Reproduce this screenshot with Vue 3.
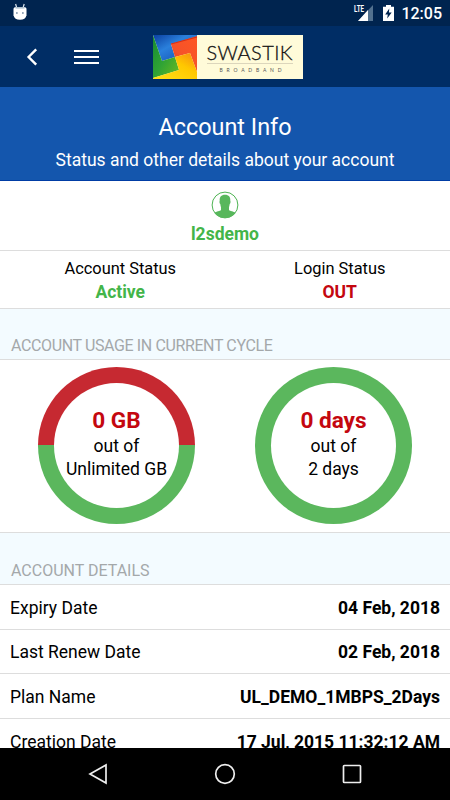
<template>
  <div class="phone">
    <div class="status-bar">
      <svg class="droid" width="14" height="18" viewBox="0 0 14 18">
        <path d="M2.600 1l1.200 4M11.200 1L10 5" stroke="#dce7f0" stroke-width="1.200" />
        <path d="M.5 6Q.5 4 3.500 4h7Q13.500 4 13.500 6v6.300Q12.500 16.800 7 16.800T.5 12.300z" fill="#fff" />
        <path d="M2.500 4.800h9" stroke="#a9bccb" stroke-width="1.500" />
        <circle cx="3.900" cy="10" r=".8" fill="#315176" />
        <circle cx="9.900" cy="10" r=".8" fill="#315176" />
      </svg>
      <div class="status-right">
        <svg width="21" height="18" viewBox="0 0 21 18">
          <path d="M20 2v16H5z" fill="#52718f" />
          <path d="M15 7v11H5z" fill="#fff" />
          <path d="M0 0h12v9.500H0z" fill="#00244f" />
          <text x="1" y="8.500" font-size="8.500" font-weight="700" fill="#fff" textLength="10" lengthAdjust="spacingAndGlyphs">LTE</text>
        </svg>
        <svg class="battery" width="11" height="16" viewBox="0 0 11 16">
          <path d="M3 0h5v1.700h3V16H0V1.700h3z" fill="#fff" />
          <path d="M6.300 3.500L2.200 9.400h2.600l-.6 4.200 4.500-6H5.900z" fill="#00244f" />
        </svg>
        <span class="clock">12:05</span>
      </div>
    </div>

    <header class="toolbar">
      <button class="icon-btn back" aria-label="Back">
        <svg width="12" height="18" viewBox="0 0 12 18"><path d="M10.200 1.300L2.600 9l7.600 7.700" fill="none" stroke="#fff" stroke-width="2.400" /></svg>
      </button>
      <button class="icon-btn menu" aria-label="Menu">
        <span></span><span></span><span></span>
      </button>
      <svg class="logo" width="150" height="44" viewBox="0 0 150 44">
        <defs>
          <linearGradient id="blue" x1="0" y1="0" x2="1" y2="1"><stop offset="0" stop-color="#0b3fa0" /><stop offset=".4" stop-color="#2a80dc" /><stop offset="1" stop-color="#1046a8" /></linearGradient>
          <linearGradient id="red" x1="1" y1="0" x2="0" y2="1"><stop offset="0" stop-color="#ff5722" /><stop offset=".6" stop-color="#f4522a" /><stop offset="1" stop-color="#d83a1c" /></linearGradient>
          <linearGradient id="green" x1="0" y1="0" x2="1" y2="1"><stop offset="0" stop-color="#168a32" /><stop offset=".5" stop-color="#2fa335" /><stop offset="1" stop-color="#6cbb20" /></linearGradient>
          <linearGradient id="yellow" x1="0" y1="1" x2="1" y2="0"><stop offset="0" stop-color="#ffe119" /><stop offset=".6" stop-color="#ffc800" /><stop offset="1" stop-color="#f58a12" /></linearGradient>
        </defs>
        <rect width="150" height="44" fill="#fffbd9" />
        <path d="M0 0h44v2L18 9l4 13-13 4z" fill="url(#blue)" />
        <path d="M44 1v36l-7-19-15 4-4-13z" fill="url(#red)" />
        <path d="M0 0l9 26 13-4 4 13L0 43z" fill="url(#green)" />
        <path d="M22 22l15-4 7 19v7H0v-1l26-8z" fill="url(#yellow)" />
        <path d="M18 9l26-7" stroke="#d92f14" stroke-width="1.200" />
        <text x="53.500" y="25" class="logo-name" textLength="86">SWASTIK</text>
        <path d="M54 28.500h86" stroke="#d3cdb5" stroke-width=".8" />
        <text x="66.500" y="36.500" class="logo-sub" textLength="62">BROADBAND</text>
      </svg>
    </header>

    <section class="hero">
      <h1>Account Info</h1>
      <p>Status and other details about your account</p>
    </section>

    <section class="user">
      <svg width="28" height="28" viewBox="0 0 28 28">
        <circle cx="14" cy="14" r="12.900" fill="#fff" stroke="#4db352" stroke-width="1" />
        <path d="M14 3.800c3.800 0 5.600 2.200 5.300 5.900.5.700.2 2.600-.6 3.400-.2 1.500-.4 2.400-.7 3.100v2.900c1 1.400 4.500 1.200 6.600 2.900C22 25.200 18 27 14 27S6 25.200 3.400 22c2.100-1.700 5.600-1.500 6.600-2.900v-2.900c-.3-.7-.5-1.600-.7-3.100-.8-.8-1.100-2.700-.6-3.400C8.400 6 10.200 3.800 14 3.800z" fill="#58b75c" />
      </svg>
      <strong class="ok">l2sdemo</strong>
    </section>

    <section class="states">
      <div v-for="s in states" :key="s.label" class="state">
        <span>{{ s.label }}</span>
        <strong :class="s.tone">{{ s.value }}</strong>
      </div>
    </section>

    <h2 class="section-title usage-title">ACCOUNT USAGE IN CURRENT CYCLE</h2>

    <section class="usage">
      <div v-for="u in usage" :key="u.used" class="ring" :class="{ half: u.half }">
        <div class="ring-inner">
          <strong>{{ u.used }}</strong>
          <span>out of</span>
          <span>{{ u.total }}</span>
        </div>
      </div>
    </section>

    <h2 class="section-title details-title">ACCOUNT DETAILS</h2>

    <ul class="details">
      <li v-for="d in details" :key="d.label">
        <span>{{ d.label }}</span>
        <strong>{{ d.value }}</strong>
      </li>
    </ul>

    <nav class="nav-bar">
      <svg width="20" height="22" viewBox="0 0 20 22"><path d="M18 2v18L2 11z" fill="none" stroke="#eee" stroke-width="1.700" /></svg>
      <svg width="22" height="22" viewBox="0 0 22 22"><circle cx="11" cy="11" r="9.300" fill="none" stroke="#eee" stroke-width="1.700" /></svg>
      <svg width="20" height="22" viewBox="0 0 20 22"><rect x="1.500" y="2.500" width="17" height="17" rx=".8" fill="none" stroke="#eee" stroke-width="1.700" /></svg>
    </nav>
  </div>
</template>

<script setup>
const states = [
  { label: 'Account Status', value: 'Active', tone: 'ok' },
  { label: 'Login Status', value: 'OUT', tone: 'bad' }
]

const usage = [
  { used: '0 GB', total: 'Unlimited GB', half: true },
  { used: '0 days', total: '2 days', half: false }
]

const details = [
  { label: 'Expiry Date', value: '04 Feb, 2018' },
  { label: 'Last Renew Date', value: '02 Feb, 2018' },
  { label: 'Plan Name', value: 'UL_DEMO_1MBPS_2Days' },
  { label: 'Creation Date', value: '17 Jul, 2015 11:32:12 AM' }
]
</script>

<style>
body {
  margin: 0;
  overflow: hidden;
}
</style>

<style scoped>
.phone {
  display: flex;
  flex-direction: column;
  width: 450px;
  height: 800px;
  overflow: hidden;
  background: #fff;
  color: #000;
  font-family: Roboto, "Liberation Sans", sans-serif;
  font-size: 17.5px;
}

.phone * {
  box-sizing: border-box;
}

.phone > * {
  flex-shrink: 0;
}

.status-bar {
  display: flex;
  justify-content: space-between;
  align-items: flex-start;
  height: 26px;
  padding: 3px 8px 0 13px;
  background: #00244f;
}

.status-right {
  display: flex;
  align-items: flex-start;
}

.battery {
  margin: 2px 7px 0 9px;
}

.clock {
  color: #fff;
  font-size: 16px;
  font-weight: 500;
  line-height: 22px;
}

.toolbar {
  display: flex;
  align-items: center;
  height: 61px;
  padding-left: 26px;
  background: #002d65;
}

.icon-btn {
  display: flex;
  padding: 0;
  border: none;
  background: transparent;
}

.menu {
  flex-direction: column;
  gap: 4px;
  width: 25px;
  margin: 1px 0 0 36px;
}

.menu span {
  width: 100%;
  height: 2px;
  background: #fff;
}

.logo {
  margin-left: 54px;
}

.logo-name {
  font-family: Lato, sans-serif;
  font-size: 20px;
  font-weight: 300;
  fill: #111;
  stroke: #111;
  stroke-width: 0.3px;
}

.logo-sub {
  font-family: Lato, sans-serif;
  font-size: 5px;
  fill: #555;
}

.hero {
  height: 94px;
  padding-top: 24px;
  border-bottom: 1px solid #003da5;
  background: #1456ad;
  color: #fff;
  text-align: center;
}

.hero h1 {
  margin: 0;
  font-size: 23.4px;
  font-weight: 400;
  line-height: 32px;
}

.hero p {
  margin: 4px 0 0;
  line-height: 26px;
}

.user {
  display: flex;
  flex-direction: column;
  align-items: center;
  height: 70px;
  padding-top: 10px;
  border-bottom: 1px solid #ddd;
}

.user strong {
  line-height: 31px;
}

.ok {
  color: #43b549;
}

.bad {
  color: #c4070f;
}

.states {
  display: flex;
  gap: 1px;
  height: 57px;
  padding: 6px 1px 0 11px;
}

.state {
  display: flex;
  flex: 1;
  flex-direction: column;
  align-items: center;
  line-height: 23px;
}

.state span {
  font-size: 16.4px;
}

.state strong {
  line-height: 25px;
}

.section-title {
  height: 52px;
  margin: 0;
  padding: 25px 11px 0;
  border-top: 1px solid #ddd;
  border-bottom: 1px solid #ddd;
  background: #f3fbff;
  color: #a4a8aa;
  font-size: 16px;
  font-weight: 400;
  line-height: 24px;
}

.usage-title {
  letter-spacing: -0.38px;
}

.usage {
  display: flex;
  gap: 60px;
  height: 172px;
  padding: 7px 0 0 38px;
}

.ring {
  width: 157px;
  height: 157px;
  padding: 16px;
  border-radius: 50%;
  background: #5bb75d;
}

.ring.half {
  background: linear-gradient(#c62931 50%, #5bb75d 50%);
}

.ring-inner {
  display: flex;
  flex-direction: column;
  align-items: center;
  width: 125px;
  height: 125px;
  padding-top: 24px;
  border-radius: 50%;
  background: #fff;
  line-height: 23px;
}

.ring-inner strong {
  margin-bottom: 1px;
  color: #c4070f;
  font-size: 22.6px;
  line-height: 27px;
}

.details-title {
  height: 53px;
  padding-top: 26px;
}

.details {
  height: 163px;
  margin: 0;
  padding: 0;
  overflow: hidden;
  list-style: none;
}

.details li {
  display: flex;
  justify-content: space-between;
  align-items: center;
  height: 44.6px;
  padding: 2px 10px 0;
  border-bottom: 1px solid #ddd;
}

.nav-bar {
  display: flex;
  justify-content: center;
  align-items: center;
  gap: 106px;
  height: 52px;
  background: #000;
}
</style>
